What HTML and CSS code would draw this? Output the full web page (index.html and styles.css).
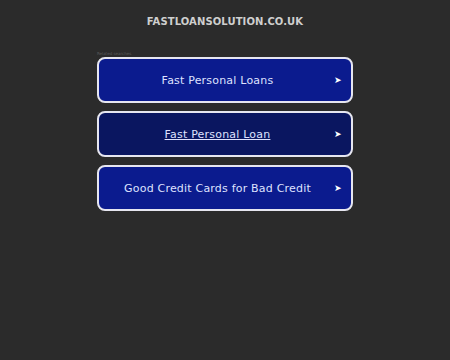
FILE: index.html
```
<!DOCTYPE html>
<html>
<head>
<meta charset="utf-8">
<link rel="stylesheet" href="styles.css">
</head>
<body>
<header class="header"><h1 class="domain">FASTLOANSOLUTION.CO.UK</h1></header>
<main class="content">
  <div class="label">Related searches</div>
  <ul class="links">
    <li><a class="link" href="#"><span class="link-text">Fast Personal Loans</span><span class="arrow">➤</span></a></li>
    <li><a class="link link-hover" href="#"><span class="link-text">Fast Personal Loan</span><span class="arrow">➤</span></a></li>
    <li><a class="link" href="#"><span class="link-text">Good Credit Cards for Bad Credit</span><span class="arrow">➤</span></a></li>
  </ul>
</main>
</body>
</html>
```
FILE: styles.css
```
html, body {
  margin: 0;
  padding: 0;
  background: #2b2b2b;
  height: 100%;
}
body {
  font-family: "DejaVu Sans", sans-serif;
}
.header {
  display: flex;
  justify-content: center;
  padding-top: 15px;
}
.domain {
  margin: 0;
  font-size: 10px;
  line-height: 13px;
  font-weight: bold;
  color: #cfcfcf;
  letter-spacing: 0.1px;
}
.content {
  width: 256px;
  margin: 0 auto;
  padding-top: 23px;
}
.label {
  font-size: 4px;
  line-height: 6px;
  color: #5a5a5a;
  height: 6px;
}
.links {
  list-style: none;
  margin: 0;
  padding: 0;
  display: flex;
  flex-direction: column;
  gap: 8px;
}
.link {
  box-sizing: border-box;
  height: 46px;
  display: flex;
  align-items: center;
  border: 2px solid #e6e6f0;
  border-radius: 8px;
  background: #0b1b8e;
  color: #dfe2ff;
  text-decoration: none;
  font-size: 11px;
  letter-spacing: 0.2px;
  padding-right: 9px;
}
.link-hover {
  background: #0a1660;
}
.link-hover .link-text {
  text-decoration: underline;
}
.link-text {
  flex: 1;
  text-align: center;
  padding-left: 8px;
}
.arrow {
  font-size: 9px;
  color: #ffffff;
  width: 8px;
  margin-left: 6px;
  letter-spacing: 0;
}
```
